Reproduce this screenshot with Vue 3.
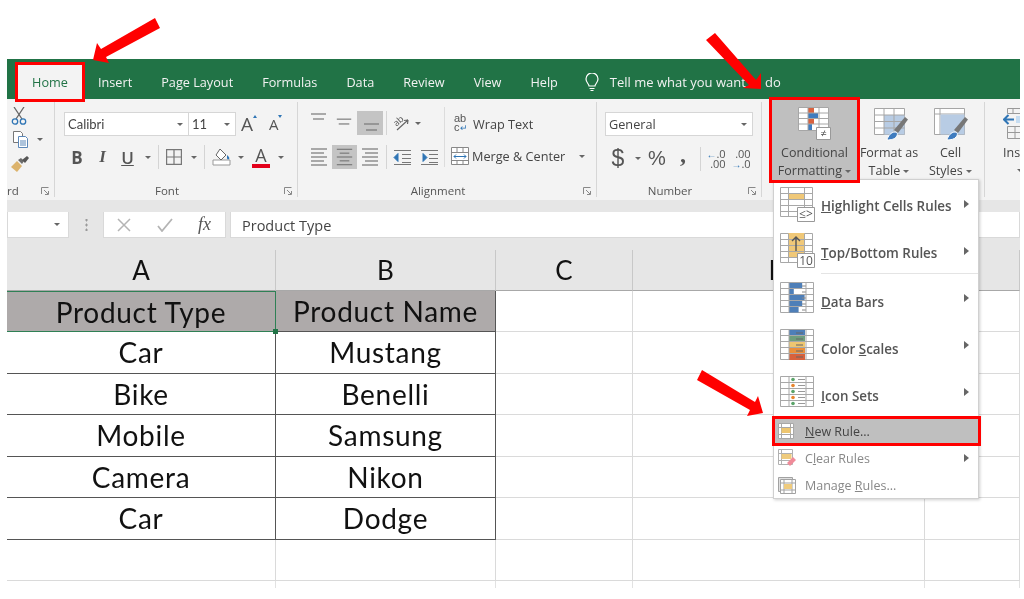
<script setup>
const tabs = ['Insert', 'Page Layout', 'Formulas', 'Data', 'Review', 'View', 'Help']

const alignRow1 = [
  { lines: [[1, 16, 3], [3, 14, 8]], hl: false },
  { lines: [[1, 16, 8], [3, 14, 13]], hl: false },
  { lines: [[3, 18, 13], [5, 16, 19]], hl: true }
]
const alignRow2 = [
  { lines: [[5, 21, 4], [5, 18, 8], [5, 21, 12], [5, 18, 16], [5, 21, 20]], hl: false },
  { lines: [[5, 21, 4], [8, 18, 8], [5, 21, 12], [8, 18, 16], [5, 21, 20]], hl: true },
  { lines: [[5, 21, 4], [8, 21, 8], [5, 21, 12], [8, 21, 16], [5, 21, 20]], hl: false }
]

const columnNames = ['A', 'B', 'C', 'D', '']
const table = [
  ['Product Type', 'Product Name'],
  ['Car', 'Mustang'],
  ['Bike', 'Benelli'],
  ['Mobile', 'Samsung'],
  ['Camera', 'Nikon'],
  ['Car', 'Dodge'],
  ['', '']
]
const blanks = [0, 1, 2]
const bars = [11, 4, 13, 11, 8]
const scale = ['#4e7fb8', '#6f9e7d', '#eec670', '#ea8f3a', '#d8613c']
const iconDots = ['#5aa469', '#e8862e', '#5aa469', '#e8862e', '#5aa469']

const bigItems = [
  { key: 'highlight', ul: 'H', rest: 'ighlight Cells Rules' },
  { key: 'top', ul: 'T', rest: 'op/Bottom Rules' }
]
const bigItems2 = [
  { key: 'bars', ul: 'D', rest: 'ata Bars', pre: '' },
  { key: 'scale', ul: 'S', rest: 'cales', pre: 'Color ' },
  { key: 'icons', ul: 'I', rest: 'con Sets', pre: '' }
]
const gridV = [9, 25]
const gridH = [6, 12, 18, 24]
</script>

<template>
  <div class="page">
    <div class="sheet">
      <nav class="tabs">
        <div class="tab home">Home</div>
        <div v-for="t in tabs" :key="t" class="tab">{{ t }}</div>
        <svg class="bulb" width="16" height="19" viewBox="0 0 16 19" fill="none" stroke="#fff" stroke-width="1.2">
          <path d="M5 13c0-2-3-3.500-3-7a6 6 0 0 1 12 0c0 3.500-3 5-3 7z" />
          <path d="M5.500 15.500h5M6.500 17.500h3" />
        </svg>
        <div class="tell">Tell me what you want to do</div>
      </nav>

      <section class="ribbon">
        <div class="group clip">
          <div class="clip-tools">
            <svg width="16" height="18" viewBox="0 0 16 18" fill="none" stroke-width="1.300">
              <path d="M3 0l8 12M13 0L5 12" stroke="#666" />
              <circle cx="4" cy="14.500" r="2.700" stroke="#2f75b5" />
              <circle cx="12" cy="14.500" r="2.700" stroke="#2f75b5" />
            </svg>
            <div class="copy-row">
              <svg width="17" height="17" viewBox="0 0 17 17" fill="#fff" stroke="#777">
                <path d="M1.500.500h7l2 2v9h-9z" />
                <path d="M6.500 5.500h7l2 2v9h-9z" stroke="#5b87b8" />
                <path d="M8 10h6M8 12h6M8 14h6" stroke="#5b87b8" />
              </svg>
              <i class="caret"></i>
            </div>
            <svg class="brush" width="18" height="16" viewBox="0 0 18 16">
              <path d="M0 11l6-6 5 5-5 6z" fill="#dcb36c" />
              <path d="M7 4l3-2 3 3-2 3z" fill="#6b6b6b" />
              <path d="M11 4l5-4 2 2-4 5z" fill="#555" />
            </svg>
          </div>
          <div class="group-label left">
            <span>rd</span>
            <svg class="launcher" width="18" height="9" viewBox="0 0 18 9" fill="none" stroke="#888">
              <path d="M5.500 7V.500h7M8 3l4 4M9 7.500h3.500V4" />
            </svg>
          </div>
        </div>

        <div class="group font-group">
          <div class="rows">
            <div class="font-row">
              <div class="select font-name"><span>Calibri</span><i class="caret"></i></div>
              <div class="select font-size"><span>11</span><i class="caret"></i></div>
              <div class="grow grow-lg">A<i class="up"></i></div>
              <div class="grow grow-sm">A<i class="down"></i></div>
            </div>
            <div class="format-row">
              <b class="glyph">B</b>
              <i class="glyph italic">I</i>
              <u class="glyph under">U</u>
              <i class="caret"></i>
              <span class="vsep"></span>
              <svg width="16" height="16" viewBox="0 0 16 16" fill="none" stroke="#777" stroke-width="1.200">
                <path d="M.600.600h14.800v14.800H.600zM8 .600v14.800M.600 8h14.800" />
              </svg>
              <i class="caret"></i>
              <span class="vsep"></span>
              <svg width="20" height="19" viewBox="0 0 20 19" fill="none">
                <path d="M1 12h17v5H1z" stroke="#999" fill="#fff" />
                <path d="M8 1l6 6-5 5-5-5z" stroke="#666" fill="#fff" />
                <path d="M15 7c2 2 3 3 2 4s-2 0-2-1z" fill="#2f75b5" />
              </svg>
              <i class="caret"></i>
              <div class="font-color">A<span class="redbar"></span></div>
              <i class="caret"></i>
            </div>
          </div>
          <div class="group-label">
            <span>Font</span>
            <svg class="launcher" width="18" height="9" viewBox="0 0 18 9" fill="none" stroke="#888">
              <path d="M5.500 7V.500h7M8 3l4 4M9 7.500h3.500V4" />
            </svg>
          </div>
        </div>

        <div class="group align-group">
          <div class="align-body">
            <div class="align-left">
              <div class="align-row first">
                <div v-for="(a, i) in alignRow1" :key="i" class="atool" :class="{ on: a.hl }">
                  <svg width="26" height="24" viewBox="0 0 26 24" stroke="#777" stroke-width="1.200">
                    <line v-for="(l, j) in a.lines" :key="j" :x1="l[0] + 4" :x2="l[1] + 4" :y1="l[2]" :y2="l[2]" />
                  </svg>
                </div>
                <span class="vsep"></span>
                <svg width="17" height="17" viewBox="0 0 17 17" fill="none" stroke="#666" stroke-width="1.200">
                  <text x="1" y="9" transform="rotate(-42 6 7)" font-size="9" fill="#555" stroke="none">ab</text>
                  <path d="M4 15L15 5M15 5l-4 .500M15 5l-.500 4" />
                </svg>
                <i class="caret"></i>
              </div>
              <div class="align-row second">
                <div v-for="(a, i) in alignRow2" :key="i" class="atool" :class="{ on: a.hl }">
                  <svg width="26" height="24" viewBox="0 0 26 24" stroke="#777" stroke-width="1.200">
                    <line v-for="(l, j) in a.lines" :key="j" :x1="l[0]" :x2="l[1]" :y1="l[2]" :y2="l[2]" />
                  </svg>
                </div>
                <span class="vsep"></span>
                <svg width="18" height="17" viewBox="0 0 18 17" fill="none" stroke="#777">
                  <path d="M1 1.500h17M9 5.500h9M9 9.500h9M9 13.500h9M1 15.500h17" />
                  <path d="M1 8.500l4-4v8z" fill="#2f75b5" stroke="#2f75b5" />
                </svg>
                <svg width="18" height="17" viewBox="0 0 18 17" fill="none" stroke="#777">
                  <path d="M1 1.500h17M9 5.500h9M9 9.500h9M9 13.500h9M1 15.500h17" />
                  <path d="M7 8.500l-4-4v8z" fill="#2f75b5" stroke="#2f75b5" />
                </svg>
              </div>
            </div>
            <div class="align-right">
              <div class="wrap-row">
                <div class="abc"><span>ab</span><span>c<em>↵</em></span></div>
                <span>Wrap Text</span>
              </div>
              <div class="merge-row">
                <svg width="18" height="18" viewBox="0 0 18 18" fill="#fff" stroke="#888">
                  <path d="M.500.500h17v17H.500zM.500 5.500h17M.500 13.500h17M6 .500v5M12 .500v5M6 13.500v4M12 13.500v4" />
                  <path d="M3 9.500h12M5 7.500l-2 2 2 2M13 7.500l2 2-2 2" fill="none" stroke="#2f75b5" />
                </svg>
                <span>Merge &amp; Center</span>
                <i class="caret"></i>
              </div>
            </div>
          </div>
          <div class="group-label">
            <span>Alignment</span>
            <svg class="launcher" width="18" height="9" viewBox="0 0 18 9" fill="none" stroke="#888">
              <path d="M5.500 7V.500h7M8 3l4 4M9 7.500h3.500V4" />
            </svg>
          </div>
        </div>

        <div class="group number-group">
          <div class="rows">
            <div class="select general"><span>General</span><i class="caret"></i></div>
            <div class="num-row">
              <span class="num-glyph dollar">$</span>
              <i class="caret"></i>
              <span class="num-glyph">%</span>
              <b class="num-comma">,</b>
              <span class="vsep"></span>
              <div class="dec"><span><em>←</em>.0</span><span>.00</span></div>
              <div class="dec"><span>.00</span><span><em>→</em>.0</span></div>
            </div>
          </div>
          <div class="group-label">
            <span>Number</span>
            <svg class="launcher" width="18" height="9" viewBox="0 0 18 9" fill="none" stroke="#888">
              <path d="M5.500 7V.500h7M8 3l4 4M9 7.500h3.500V4" />
            </svg>
          </div>
        </div>

        <div class="group styles-group">
          <div class="style-btn cf">
            <svg width="34" height="33" viewBox="0 0 34 33" fill="none" stroke="#a6a6a6">
              <path d="M.500.500h30v23h-30z" fill="#fff" />
              <path d="M10 1h6v5h-6z" fill="#d9623f" stroke="none" />
              <path d="M10 6h10v5.500H10z" fill="#3f7cbf" stroke="none" />
              <path d="M10 11.500h6V17h-6z" fill="#d9623f" stroke="none" />
              <path d="M10 17h4v6h-4z" fill="#3f7cbf" stroke="none" />
              <path d="M.500 6h30M.500 11.500h30M.500 17h30M10 .500v23M21 .500v23" />
              <path d="M18.500 20.500h14v12h-14z" fill="#fff" stroke="#999" />
              <text x="25.500" y="30" text-anchor="middle" font-size="11" fill="#555" stroke="none">≠</text>
            </svg>
            <div class="style-text">Conditional</div>
            <div class="style-text">Formatting <i class="caret"></i></div>
          </div>
          <div class="style-btn format-btn">
            <svg width="34" height="33" viewBox="0 0 34 33" fill="none" stroke="#a6a6a6">
              <path d="M.500.500h30v26h-30z" fill="#fff" />
              <path d="M10 7h20.500v19.500H10z" fill="#b8cce4" stroke="none" />
              <path d="M.500 7h30M.500 13.500h30M.500 20h30M10 .500v26M20 .500v26" />
              <path d="M20 22L31 9l3 2.500L24 25z" fill="#777" stroke="none" />
              <path d="M13 32c1-4 4-8 8-8 3 0 3 3 1 5-1 2-5 3-9 3z" fill="#3f7cbf" stroke="#fff" />
            </svg>
            <div class="style-text">Format as</div>
            <div class="style-text">Table <i class="caret"></i></div>
          </div>
          <div class="style-btn cell-btn">
            <svg width="34" height="33" viewBox="0 0 34 33" fill="none" stroke="#a6a6a6">
              <path d="M.500.500h30v26h-30z" fill="#fff" />
              <path d="M.500 6h30M6 .500v26" />
              <path d="M6.500 6.500h24v20h-24z" fill="#b8cce4" stroke="none" />
              <path d="M20 22L31 9l3 2.500L24 25z" fill="#777" stroke="none" />
              <path d="M13 32c1-4 4-8 8-8 3 0 3 3 1 5-1 2-5 3-9 3z" fill="#3f7cbf" stroke="#fff" />
            </svg>
            <div class="style-text">Cell</div>
            <div class="style-text">Styles <i class="caret"></i></div>
          </div>
        </div>

        <div class="group cells-group">
          <svg width="18" height="33" viewBox="0 0 18 33" fill="none" stroke="#999">
            <path d="M4.500.500h20M4.500 5.500h20M10 .500v5M4.500 .500v5M4.500 18.500h20M4.500 24.500h20M4.500 30.500h20M4.500 18.500v12M12 18.500v12" />
            <path d="M1 11.500h10M5.500 7l-4.500 4.500L5.500 16" stroke="#2f75b5" stroke-width="2" />
            <path d="M13 8h5v7h-5z" fill="#c6dcf0" stroke="none" />
          </svg>
          <div class="style-text">Ins</div>
          <i class="caret cells-caret"></i>
        </div>
      </section>

      <section class="formula">
        <div class="namebox"><i class="caret"></i></div>
        <div class="dots"></div>
        <div class="fx-box">
          <svg width="14" height="14" viewBox="0 0 14 14" stroke="#b4b4b4" stroke-width="1.500"><path d="M1 1l12 12M13 1L1 13" /></svg>
          <svg width="16" height="14" viewBox="0 0 16 14" fill="none" stroke="#b4b4b4" stroke-width="1.800"><path d="M1 8l4 5L15 1" /></svg>
          <span class="fx">fx</span>
        </div>
        <div class="input">Product Type</div>
      </section>

      <section class="workbook">
        <div class="columns">
          <div v-for="(c, i) in columnNames" :key="i" class="col-head">{{ c }}</div>
        </div>
        <div class="cells">
          <template v-for="(row, r) in table" :key="r">
            <div
              v-for="(value, c) in row"
              :key="c"
              class="cell"
              :class="{ data: r < 6, title: r === 0, selected: r === 0 && c === 0 }"
            >{{ value }}</div>
            <div v-for="b in blanks" :key="b" class="cell"></div>
          </template>
          <div v-for="b in 5" :key="'stub' + b" class="stub"></div>
        </div>
      </section>
    </div>

    <aside class="menu">
      <div v-for="m in bigItems" :key="m.key" class="big" :class="m.key">
        <svg width="35" height="35" viewBox="0 0 35 35" fill="none" stroke="#a8a8a8">
          <path d="M.500.500h32v29h-32z" fill="#fff" />
          <path v-if="m.key === 'highlight'" d="M8 7h17v6H8z" fill="#f0c878" stroke="none" />
          <path v-else d="M8 0h17v24H8z" fill="#f0c878" stroke="none" />
          <path v-for="x in gridV" :key="x" :d="`M${x - 1}.500 .500v29`" />
          <path v-for="y in gridH" :key="y" :d="`M.500 ${y + 0.5}h32`" />
          <path d="M17.500 20.500h17v14h-17z" fill="#fff" stroke="#999" />
          <text v-if="m.key === 'highlight'" x="26" y="31" text-anchor="middle" font-size="12" fill="#555" stroke="none">≤&gt;</text>
          <template v-else>
            <path d="M16 18V4M12 8l4-4 4 4" stroke="#555" stroke-width="1.400" />
            <text x="26" y="32" text-anchor="middle" font-size="12" fill="#555" stroke="none">10</text>
          </template>
        </svg>
        <span class="big-text upper"><u>{{ m.ul }}</u>{{ m.rest }}</span>
        <i class="sub"></i>
      </div>
      <div class="menu-sep"></div>
      <div v-for="m in bigItems2" :key="m.key" class="big">
        <svg width="35" height="31" viewBox="0 0 35 31" fill="none" stroke="#a8a8a8">
          <path d="M.500.500h33v30h-33z" fill="#fff" />
          <template v-if="m.key === 'bars'">
            <path v-for="(w, i) in bars" :key="i" :d="`M9 ${1 + i * 6}h${w * 1.2}v5.500H9z`" fill="#4e7fb8" stroke="none" />
            <path v-for="(w, i) in bars" :key="'d' + i" :d="`M22 ${4 + i * 6}h4`" stroke="#888" />
          </template>
          <template v-else-if="m.key === 'scale'">
            <path v-for="(col, i) in scale" :key="i" :d="`M9 ${1 + i * 6}h16v6H9z`" :fill="col" stroke="none" />
            <path v-for="(col, i) in scale" :key="'d' + i" :d="`M16 ${4 + i * 6}h7`" stroke="#666" />
          </template>
          <template v-else>
            <circle v-for="(col, i) in iconDots" :key="i" cx="13" :cy="3.5 + i * 6" r="1.800" :fill="col" stroke="none" />
            <path v-for="(col, i) in iconDots" :key="'d' + i" :d="`M18 ${3.5 + i * 6}h7`" stroke="#999" />
          </template>
          <path d="M.500 6.500h33M.500 12.500h33M.500 18.500h33M.500 24.500h33M9 .500v30M26 .500v30" />
        </svg>
        <span class="big-text lower">{{ m.pre }}<u>{{ m.ul }}</u>{{ m.rest }}</span>
        <i class="sub"></i>
      </div>
      <div class="small new-rule">
        <svg width="16" height="16" viewBox="0 0 16 16" fill="#fff" stroke="#a8a8a8">
          <path d="M.500.500h15v15H.500zM3.500.500v15M12.500.500v15M.500 4.500h15M.500 11.500h15" />
          <path d="M3.500 5h9v5h-9z" fill="#eec670" stroke="none" />
        </svg>
        <span><u>N</u>ew Rule...</span>
      </div>
      <div class="small muted clear">
        <svg width="18" height="18" viewBox="0 0 18 18" fill="#fff" stroke="#a8a8a8">
          <path d="M.500.500h14v15H.500zM.500 4.500h14M.500 11.500h14M3.500.500v15" />
          <path d="M3.500 5h10v5h-10z" fill="#eec670" stroke="none" />
          <path d="M9 14l6-6 3 3-6 6z" fill="#ef7f8f" stroke="none" />
        </svg>
        <span>C<u>l</u>ear Rules</span>
        <i class="sub"></i>
      </div>
      <div class="small muted manage">
        <svg width="18" height="17" viewBox="0 0 18 17" fill="#fff" stroke="#999">
          <path d="M.500.500h14v14H.500z" fill="#ddd" />
          <path d="M2.500 2.500h15v14h-15zM2.500 6h15M2.500 13h15M6 2.500v14M14 2.500v14" />
          <path d="M6 7h8v5H6z" fill="#eec670" stroke="none" />
        </svg>
        <span>Manage <u>R</u>ules...</span>
      </div>
    </aside>

    <svg class="arrows" width="1024" height="599" viewBox="0 0 1024 599" fill="#ff0000">
      <polygon points="155,18 160,28 106,57 109,63 93,60 97,43 101,49" />
      <polygon points="715,33 756,80 761,73 761,89 743,88 749,85 706,40" />
      <polygon points="702,370 755,402 758,396 763,413 747,416 750,410 697,380" />
    </svg>
  </div>
</template>

<style scoped>
.page {
  position: relative;
  width: 1024px;
  height: 599px;
  overflow: hidden;
  background: #fff;
  font-family: "Open Sans", "Liberation Sans", sans-serif;
  color: #444;
  filter: blur(0.45px);
}
.sheet { margin-left: 7px; width: 1013px; padding-top: 59px; }

.tabs {
  display: flex;
  align-items: flex-end;
  height: 40px;
  padding-left: 11px;
  background: #217346;
  color: #f2f2f2;
  font-size: 12.700px;
}
.tab { height: 34px; line-height: 34px; margin-right: 29px; }
.tab.home {
  width: 64px;
  margin-right: 16px;
  text-align: center;
  background: #f3f3f3;
  color: #217346;
  outline: 3px solid #f00;
}
.bulb { margin: 0 10px 7px -3px; }
.tell { height: 34px; line-height: 34px; font-size: 13px; }

.ribbon {
  display: flex;
  height: 101px;
  padding-top: 3px;
  box-sizing: border-box;
  background: #f3f3f3;
  font-size: 12.700px;
}
.group {
  position: relative;
  display: flex;
  flex-direction: column;
  height: 95px;
  box-sizing: border-box;
  border-right: 1px solid #d6d6d6;
}
.group-label {
  display: flex;
  margin-top: auto;
  margin-bottom: -1px;
  height: 14px;
  line-height: 14px;
  font-size: 11.500px;
  color: #555;
}
.group-label span { flex: 1; text-align: center; }
.group-label.left span { text-align: left; }
.launcher { align-self: center; }
.caret {
  display: inline-block;
  width: 0;
  height: 0;
  border-left: 3px solid transparent;
  border-right: 3px solid transparent;
  border-top: 3px solid #666;
  vertical-align: middle;
  justify-self: center;
}
.vsep { display: block; width: 1px; height: 24px; background: #d4d4d4; justify-self: center; }

.clip { width: 48px; }
.clip-tools { display: flex; flex-direction: column; gap: 6px; padding: 5px 0 0 4px; }
.copy-row { display: flex; align-items: center; gap: 8px; padding-left: 1px; }
.brush { margin-top: 2px; }

.font-group { width: 243px; padding-left: 9px; }
.font-group .group-label { margin-left: -9px; }
.rows { display: flex; flex-direction: column; gap: 9px; padding-top: 10px; }
.font-row { display: flex; height: 24px; align-items: center; }
.select {
  display: flex;
  align-items: center;
  justify-content: space-between;
  height: 24px;
  box-sizing: border-box;
  padding: 0 5px 0 3px;
  background: #fff;
  border: 1px solid #d6d6d6;
  font-size: 12.500px;
}
.font-name { width: 125px; font-family: Lato, sans-serif; font-size: 13px; }
.font-size { width: 48px; margin-left: -1px; font-family: Lato, sans-serif; font-size: 13px; }
.grow { position: relative; color: #555; line-height: 24px; }
.grow-lg { margin-left: 5px; width: 28px; font-size: 19px; }
.grow-sm { width: 20px; font-size: 15px; }
.up, .down { position: absolute; top: 3px; width: 0; height: 0; border-left: 2.500px solid transparent; border-right: 2.500px solid transparent; }
.up { left: 12px; border-bottom: 3px solid #2f75b5; }
.down { left: 9px; border-top: 3px solid #2f75b5; }
.format-row {
  display: grid;
  grid-template-columns: 26px 25px 25px 16px 4px 28px 12px 8px 28px 10px 30px 10px;
  align-items: center;
  justify-items: center;
  height: 24px;
}
.glyph { font-size: 17px; color: #555; font-style: normal; }
.italic { font-family: "Liberation Serif", serif; font-style: italic; font-weight: 700; }
.under { font-weight: 600; }
.font-color { display: flex; flex-direction: column; align-items: center; font-size: 18px; line-height: 17px; color: #555; }
.redbar { width: 18px; height: 4px; background: #e3001b; }

.align-group { width: 299px; }
.align-body { display: flex; height: 65px; padding-top: 5px; box-sizing: border-box; }
.align-left { width: 147px; box-sizing: border-box; padding-left: 8px; border-right: 1px solid #dcdcdc; }
.align-row { display: grid; align-items: center; justify-items: center; height: 24px; }
.align-row.first { margin-top: 4px; grid-template-columns: 26px 25px 26px 6px 25px 8px; }
.align-row.second { margin-top: 10px; grid-template-columns: 26px 25px 26px 6px 25px 30px; }
.atool { width: 100%; height: 24px; display: flex; justify-content: center; }
.atool.on { background: #c4c4c4; }
.align-right { display: flex; flex-direction: column; gap: 11px; padding-top: 6px; }
.wrap-row { display: flex; align-items: center; gap: 5px; height: 24px; padding-left: 9px; color: #444; }
.abc { display: flex; flex-direction: column; width: 14px; font-family: "Liberation Sans", sans-serif; font-size: 11px; line-height: 9px; color: #555; }
.abc em { font-style: normal; font-size: 9px; color: #2f75b5; }
.merge-row { display: flex; align-items: center; height: 24px; padding-left: 6px; gap: 3px; }
.merge-row .caret { margin-left: 11px; }

.number-group { width: 165px; padding-left: 8px; }
.number-group .group-label { margin-left: -8px; }
.general { width: 148px; font-size: 12.700px; padding-left: 3px; }
.num-row { display: grid; grid-template-columns: 26px 14px 24px 28px 6px 26px 24px; align-items: center; justify-items: center; height: 24px; }
.num-glyph { font-size: 20px; color: #555; font-family: "Liberation Sans", sans-serif; }
.dollar { font-size: 23px; }
.num-comma { font-size: 24px; line-height: 12px; margin-top: -10px; color: #555; font-family: "Liberation Serif", serif; }
.dec { display: flex; flex-direction: column; align-items: flex-end; font-size: 11px; line-height: 10px; color: #555; }
.dec em { font-style: normal; font-weight: 700; font-size: 10px; color: #2f75b5; }

.styles-group { flex-direction: row; width: 223px; padding-left: 10px; }
.style-btn { display: flex; flex-direction: column; align-items: center; height: 80px; box-sizing: border-box; padding-top: 6px; }
.style-btn svg { height: 33px; margin-bottom: 3px; flex: none; }
.style-text { height: 18px; line-height: 18px; font-size: 12.500px; white-space: nowrap; }
.cf {
  position: relative;
  z-index: 3;
  width: 85px;
  margin-top: -2px;
  padding-top: 7px;
  background: #bfbfbf;
  outline: 3px solid #f00;
}
.cf svg { margin-bottom: 4px; }
.format-btn { width: 64px; }
.format-btn svg { margin-left: 4px; }
.cell-btn { width: 59px; }
.cells-group { width: 35px; border-right: 0; overflow: hidden; padding: 6px 0 0 18px; }
.cells-group svg { flex: none; margin-bottom: 3px; }
.cells-caret { margin-left: 14px; margin-top: 7px; }

.formula {
  display: flex;
  height: 38px;
  padding-top: 12px;
  box-sizing: border-box;
  background: #e6e6e6;
}
.namebox, .fx-box, .input {
  background: #fff;
  box-sizing: border-box;
  border: 1px solid #d9d9d9;
  border-top: 0;
}
.namebox { display: flex; align-items: center; justify-content: flex-end; width: 62px; padding-right: 8px; }
.dots { width: 34px; background: radial-gradient(circle, #999 1px, transparent 1.300px) center / 3px 5px repeat-y; margin: 7px 0; }
.fx-box { display: flex; align-items: center; width: 123px; padding-left: 13px; gap: 26px; }
.fx { font-family: "Liberation Serif", serif; font-style: italic; font-size: 18px; color: #555; margin-left: -1px; }
.input { flex: 1; margin-left: 4px; padding-left: 11px; line-height: 27px; font-size: 14.500px; }

.workbook { background: #e6e6e6; padding-top: 12px; }
.columns, .cells { display: grid; grid-template-columns: 269px 220px 137px 292px 95px; }
.col-head {
  height: 41px;
  box-sizing: border-box;
  line-height: 41px;
  text-align: center;
  font-family: Lato, sans-serif;
  font-size: 26px;
  color: #111;
  border-right: 1px solid #c8c8c8;
  border-bottom: 1px solid #a8a8a8;
}
.cells { background: #fff; grid-template-rows: repeat(7, 41.450px) 7px; }
.cell {
  position: relative;
  box-sizing: border-box;
  border-right: 1px solid #dadada;
  border-bottom: 1px solid #dadada;
  text-align: center;
  line-height: 41px;
  font-family: Lato, sans-serif;
  font-size: 28px;
  letter-spacing: 0.700px;
  color: #111;
}
.cell.data { border-right-color: #555; border-bottom-color: #555; }
.cell.title { background: #aeaaaa; }
.cell.selected { border: 1px solid #2f8055; border-left: 0; line-height: 40px; }
.cell.selected::after {
  content: "";
  position: absolute;
  right: -3px;
  bottom: -3px;
  width: 5px;
  height: 5px;
  background: #217346;
  z-index: 1;
}
.stub { border-right: 1px solid #e2e2e2; }

.menu {
  position: absolute;
  z-index: 2;
  left: 773px;
  top: 179px;
  width: 206px;
  height: 320px;
  box-sizing: border-box;
  background: #fff;
  border: 1px solid #d0d0d0;
  box-shadow: 1px 1px 3px rgba(0, 0, 0, 0.2);
  color: #555;
}
.big { display: flex; align-items: center; height: 47px; padding-left: 6px; }
.big.highlight { height: 48px; }
.big.top { height: 45px; }
.big svg { flex: none; }
.big-text { margin-left: 6px; font-size: 13.400px; font-weight: 600; white-space: nowrap; }
.big-text.upper { padding-top: 4px; }
.big-text.lower { padding-top: 8px; }
.sub {
  margin: 0 9px 0 auto;
  width: 0;
  height: 0;
  border-top: 4.500px solid transparent;
  border-bottom: 4.500px solid transparent;
  border-left: 5px solid #666;
}
.menu-sep { height: 1px; margin-left: 47px; background: #e4e4e4; }
.small { display: flex; align-items: center; padding-left: 4px; font-size: 12.500px; }
.small span { white-space: nowrap; }
.new-rule {
  height: 24px;
  margin: 4px 0 0 1px;
  padding-left: 3px;
  gap: 11px;
  background: #bfbfbf;
  outline: 3px solid #f00;
  color: #444;
}
.muted { color: #888; }
.muted svg { opacity: 0.9; }
.clear { height: 28px; margin-top: 1px; gap: 9px; }
.manage { height: 27px; gap: 9px; }
.arrows { position: absolute; z-index: 4; left: 0; top: 0; }
</style>
